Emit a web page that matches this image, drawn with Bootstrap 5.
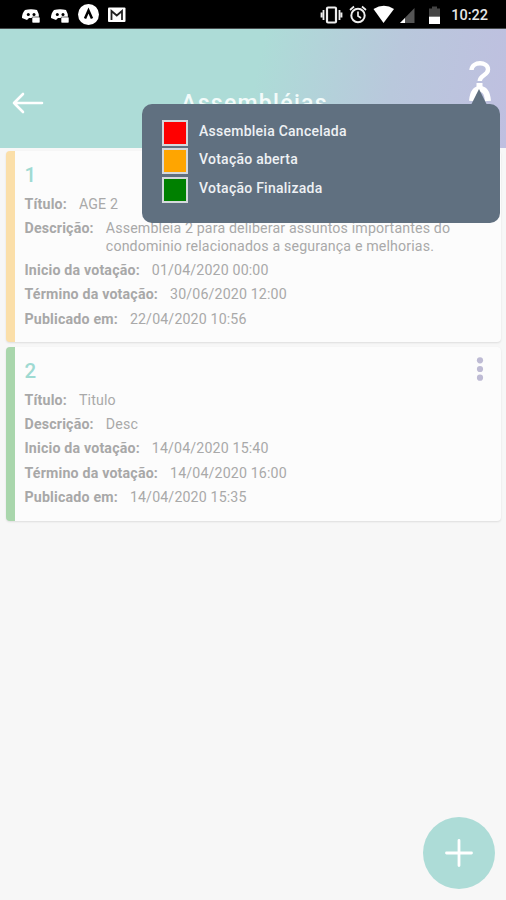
<!DOCTYPE html>
<html lang="pt-BR">
<head>
<meta charset="utf-8">
<meta name="viewport" content="width=device-width, initial-scale=1">
<title>Assembléias</title>
<link href="https://cdn.jsdelivr.net/npm/bootstrap@5.3.0/dist/css/bootstrap.min.css" rel="stylesheet">
<style>
body{font-family:Roboto,"Liberation Sans",sans-serif;background:#f7f7f7;height:900px;overflow:hidden}
.statusbar{height:29px;background:#000;border-bottom:1px solid #45494b}
.clock{font-size:14.5px;font-weight:500;line-height:31px;color:#e6e6e6;padding-right:18px}
.topbar{height:119px;background:linear-gradient(102deg,#addcd7 0%,#addcd7 50%,#b9c8dc 76%,#bfbfe0 100%)}
.page-title{font-size:23px;line-height:28px;letter-spacing:1.3px;font-weight:500;color:#f3fbfa;padding-top:61px;padding-left:3px}
.back{padding:62px 0 0 12px;width:60px}
.help{width:60px;padding:30px 0 0 21px}
.cards{padding:3px 5px 0 6px;gap:5px}
.item{background:#fcfcfc;border-radius:4px;border-left:9px solid;box-shadow:0 1px 2px #ddd;color:#a9a9a9;font-size:14.2px;line-height:17.5px;padding:11px 0 0 9.5px}
.item-open{border-left-color:#fbdfa9;height:191px}
.item-done{border-left-color:#a9d6ac;height:174px}
.num{font-size:20.5px;line-height:26px;font-weight:500;color:#9fdad2;margin-bottom:7.7px}
.line{gap:12px;margin-bottom:6.85px}
.line dt{font-weight:700;color:#a8a8a8;white-space:nowrap;letter-spacing:.18px}
.line dd{margin:0;letter-spacing:.15px}
.dots{padding-right:17.500px;line-height:0;margin-top:-1px}
.legend{left:142px;top:104px;width:358px;height:118.500px;border-radius:10px;background:#607080;padding:15.500px 0 0 20px;color:#eef1f4;font-size:14px;font-weight:500}
.legend-row{height:28.7px;gap:11px;line-height:22px;letter-spacing:.25px}
.swatch{width:26px;height:26px;border:2px solid #d5d9dc}
.sw-red{background:#f00}.sw-orange{background:#ffa500}.sw-green{background:#008000}
.pointer{top:-15px;right:11px;line-height:0}
.fab{width:72px;height:72px;right:11px;bottom:11px;background:#addcd7}
</style>
</head>
<body class="position-relative">
<div class="statusbar d-flex justify-content-between">
<svg width="140" height="28" viewBox="0 0 140 28" fill="#fff">
<g id="chat"><path d="M25 10q6-1.500 12 0 2 3 2 8l-5 2-1-2h-4l-2 2-5-2q0-5 3-8z"/><circle cx="28.3" cy="14.5" r="1.5" fill="#000"/><circle cx="34" cy="14.5" r="1.5" fill="#000"/><rect x="32" y="17" width="8" height="6" rx="1" stroke="#000" stroke-width=".6"/></g>
<use href="#chat" x="29"/>
<circle cx="88.5" cy="14.5" r="10.5"/><path d="M85 18.5l3.500-8 3.500 8" fill="none" stroke="#000" stroke-width="2.500"/>
<rect x="108" y="7.500" width="17.500" height="14.500" rx="1"/><path d="M111.500 20v-9l5.250 4.500 5.250-4.500v9" fill="none" stroke="#222" stroke-width="1.800"/>
</svg>
<div class="d-flex">
<svg width="132" height="28" viewBox="0 0 132 28" fill="none" stroke="#eee">
<rect x="8" y="7.500" width="9" height="15" rx="1" stroke-width="2.200"/><path d="M4.500 10v10M20.500 10v10M2.500 12.500v5M22.500 12.500v5" stroke-width="1.800"/>
<circle cx="39" cy="15.500" r="6.700" stroke-width="2"/><path d="M39 11.500v4.500l3 2M31 10l4-3.500M47 10l-4-3.500" stroke-width="1.700"/>
<path d="M54.500 9q10.500-6.500 20.500 0L64.500 23z" fill="#fff" stroke="none"/>
<path d="M95.500 8v15H81z" fill="#555" stroke="none"/><path d="M86 18v5h-5z" fill="#fff" stroke="none"/>
<path d="M113 6.500h5v2h3V16h-11V8.500h3z" fill="#444" stroke="none"/><path d="M110 16.500h11V24h-11z" fill="#fff" stroke="none"/>
</svg>
<div class="clock">10:22</div>
</div>
</div>
<header class="topbar d-flex justify-content-between">
<div class="back"><svg class="d-block" width="32" height="24" viewBox="0 0 32 24" fill="none" stroke="#fff" stroke-width="2.600" stroke-linecap="round" stroke-linejoin="round"><path d="M30 12H2M11 3L2 12l9 9"/></svg></div>
<div class="page-title">Assembléias</div>
<div class="help"><svg class="d-block" width="24" height="44" viewBox="0 0 24 44" fill="none" stroke="#fff" stroke-width="4.400"><path d="M4.500 11c.5-9 16.500-9 16.500-.5 0 6-8 5.500-8.300 11.500"/><path d="M12.500 24v5" stroke-width="6"/><path d="M5 42q1-12 8-12t8 12" stroke-width="6"/></svg></div>
</header>
<main class="cards d-flex flex-column">
<section class="item item-open">
<div class="num">1</div>
<dl class="mb-0">
<div class="line d-flex"><dt>Título:</dt><dd>AGE 2</dd></div>
<div class="line d-flex"><dt>Descrição:</dt><dd>Assembleia 2 para deliberar assuntos importantes do<br>condominio relacionados a segurança e melhorias.</dd></div>
<div class="line d-flex"><dt>Inicio da votação:</dt><dd>01/04/2020 00:00</dd></div>
<div class="line d-flex"><dt>Término da votação:</dt><dd>30/06/2020 12:00</dd></div>
<div class="line d-flex"><dt>Publicado em:</dt><dd>22/04/2020 10:56</dd></div>
</dl>
</section>
<section class="item item-done">
<div class="d-flex justify-content-between">
<div class="num">2</div>
<div class="dots"><svg width="8" height="26" viewBox="0 0 8 26" fill="#bebbd4"><circle cx="4" cy="3.300" r="3.100"/><circle cx="4" cy="12" r="3.100"/><circle cx="4" cy="20.700" r="3.100"/></svg></div>
</div>
<dl class="mb-0">
<div class="line d-flex"><dt>Título:</dt><dd>Titulo</dd></div>
<div class="line d-flex"><dt>Descrição:</dt><dd>Desc</dd></div>
<div class="line d-flex"><dt>Inicio da votação:</dt><dd>14/04/2020 15:40</dd></div>
<div class="line d-flex"><dt>Término da votação:</dt><dd>14/04/2020 16:00</dd></div>
<div class="line d-flex"><dt>Publicado em:</dt><dd>14/04/2020 15:35</dd></div>
</dl>
</section>
</main>
<aside class="legend position-absolute">
<div class="pointer position-absolute"><svg width="20" height="16" viewBox="0 0 20 16"><path d="M2 16L10 0l8 16z" fill="#607080"/></svg></div>
<div class="legend-row d-flex"><span class="swatch sw-red"></span>Assembleia Cancelada</div>
<div class="legend-row d-flex"><span class="swatch sw-orange"></span>Votação aberta</div>
<div class="legend-row d-flex"><span class="swatch sw-green"></span>Votação Finalizada</div>
</aside>
<button type="button" class="fab position-absolute rounded-circle border-0 p-0 d-flex align-items-center justify-content-center" aria-label="Adicionar"><svg width="28" height="28" viewBox="0 0 28 28" stroke="#fff" stroke-width="2.800" stroke-linecap="round"><path d="M14 1.500v25M1.500 14h25"/></svg></button>
<script src="https://cdn.jsdelivr.net/npm/bootstrap@5.3.0/dist/js/bootstrap.bundle.min.js"></script>
</body>
</html>
